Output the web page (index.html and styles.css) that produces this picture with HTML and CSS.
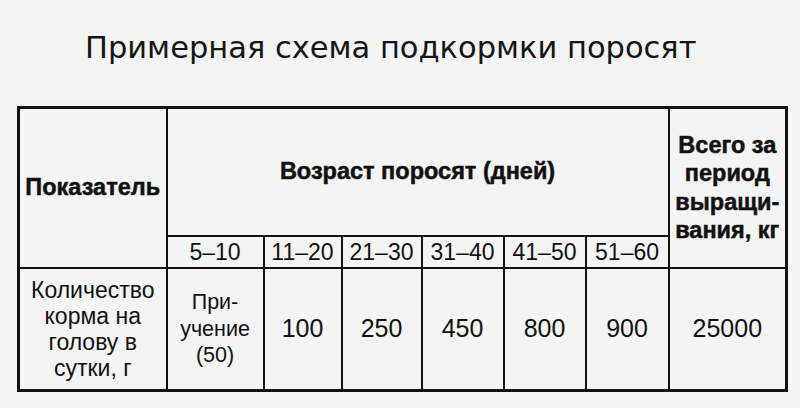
FILE: index.html
```html
<!DOCTYPE html>
<html lang="ru">
<head>
<meta charset="utf-8">
<title>Примерная схема подкормки поросят</title>
<link rel="stylesheet" href="styles.css">
</head>
<body>
<div class="page">
  <h1 class="title">Примерная схема подкормки поросят</h1>
  <table class="feed">
    <colgroup>
      <col class="c-ind">
      <col class="c1">
      <col class="c2">
      <col class="c3">
      <col class="c4">
      <col class="c5">
      <col class="c6">
      <col class="c-tot">
    </colgroup>
    <tr class="r-head">
      <th rowspan="2" class="ind">Показатель</th>
      <th colspan="6" class="age">Возраст поросят (дней)</th>
      <th rowspan="2" class="tot">Всего за<br>период<br>выращи-<br>вания, кг</th>
    </tr>
    <tr class="r-sub">
      <td>5–10</td>
      <td>11–20</td>
      <td>21–30</td>
      <td>31–40</td>
      <td>41–50</td>
      <td>51–60</td>
    </tr>
    <tr class="r-data">
      <td class="ind-text">Количество<br>корма на<br>голову в<br>сутки, г</td>
      <td class="multi">При-<br>учение<br>(50)</td>
      <td>100</td>
      <td>250</td>
      <td>450</td>
      <td>800</td>
      <td>900</td>
      <td>25000</td>
    </tr>
  </table>
</div>
</body>
</html>
```
FILE: styles.css
```css
html, body {
  margin: 0;
  padding: 0;
  background: #f4f4f4;
}

.page {
  width: 800px;
  height: 408px;
  padding: 0 0 0 17px;
  box-sizing: border-box;
  color: #111;
}

.title {
  margin: 0;
  padding: 28px 0 0 68px;
  height: 106px;
  box-sizing: border-box;
  font-family: "DejaVu Sans", sans-serif;
  font-weight: normal;
  font-size: 30.5px;
  line-height: 40px;
  color: #151515;
}

.feed {
  border-collapse: collapse;
  table-layout: fixed;
  width: 768px;
  border: 3px solid #111;
  font-family: "Liberation Sans", Arial, sans-serif;
  color: #111;
}

.feed th, .feed td {
  border: 2px solid #111;
  padding: 0;
  text-align: center;
  vertical-align: middle;
}

.c-ind { width: 148px; }
.c1 { width: 97px; }
.c2 { width: 78px; }
.c3 { width: 80px; }
.c4 { width: 82px; }
.c5 { width: 82px; }
.c6 { width: 83px; }
.c-tot { width: 118px; }

.r-head { height: 128px; }
.r-sub { height: 32px; }
.r-data { height: 123px; }

.feed th {
  font-size: 23.5px;
  font-weight: bold;
  -webkit-text-stroke: 0.5px #111;
}

.ind {
  text-align: left;
  padding-left: 2px;
  padding-top: 2px;
}

.age {
  padding-top: 0;
}

.tot {
  line-height: 28.5px;
  padding-bottom: 2px;
}

.r-sub td {
  font-size: 23px;
  line-height: 28px;
}

.r-data td {
  font-size: 25px;
}

.r-data td.ind-text {
  font-size: 23px;
  line-height: 26px;
}

.r-data td.multi {
  font-size: 21.5px;
  line-height: 26.5px;
}
```
